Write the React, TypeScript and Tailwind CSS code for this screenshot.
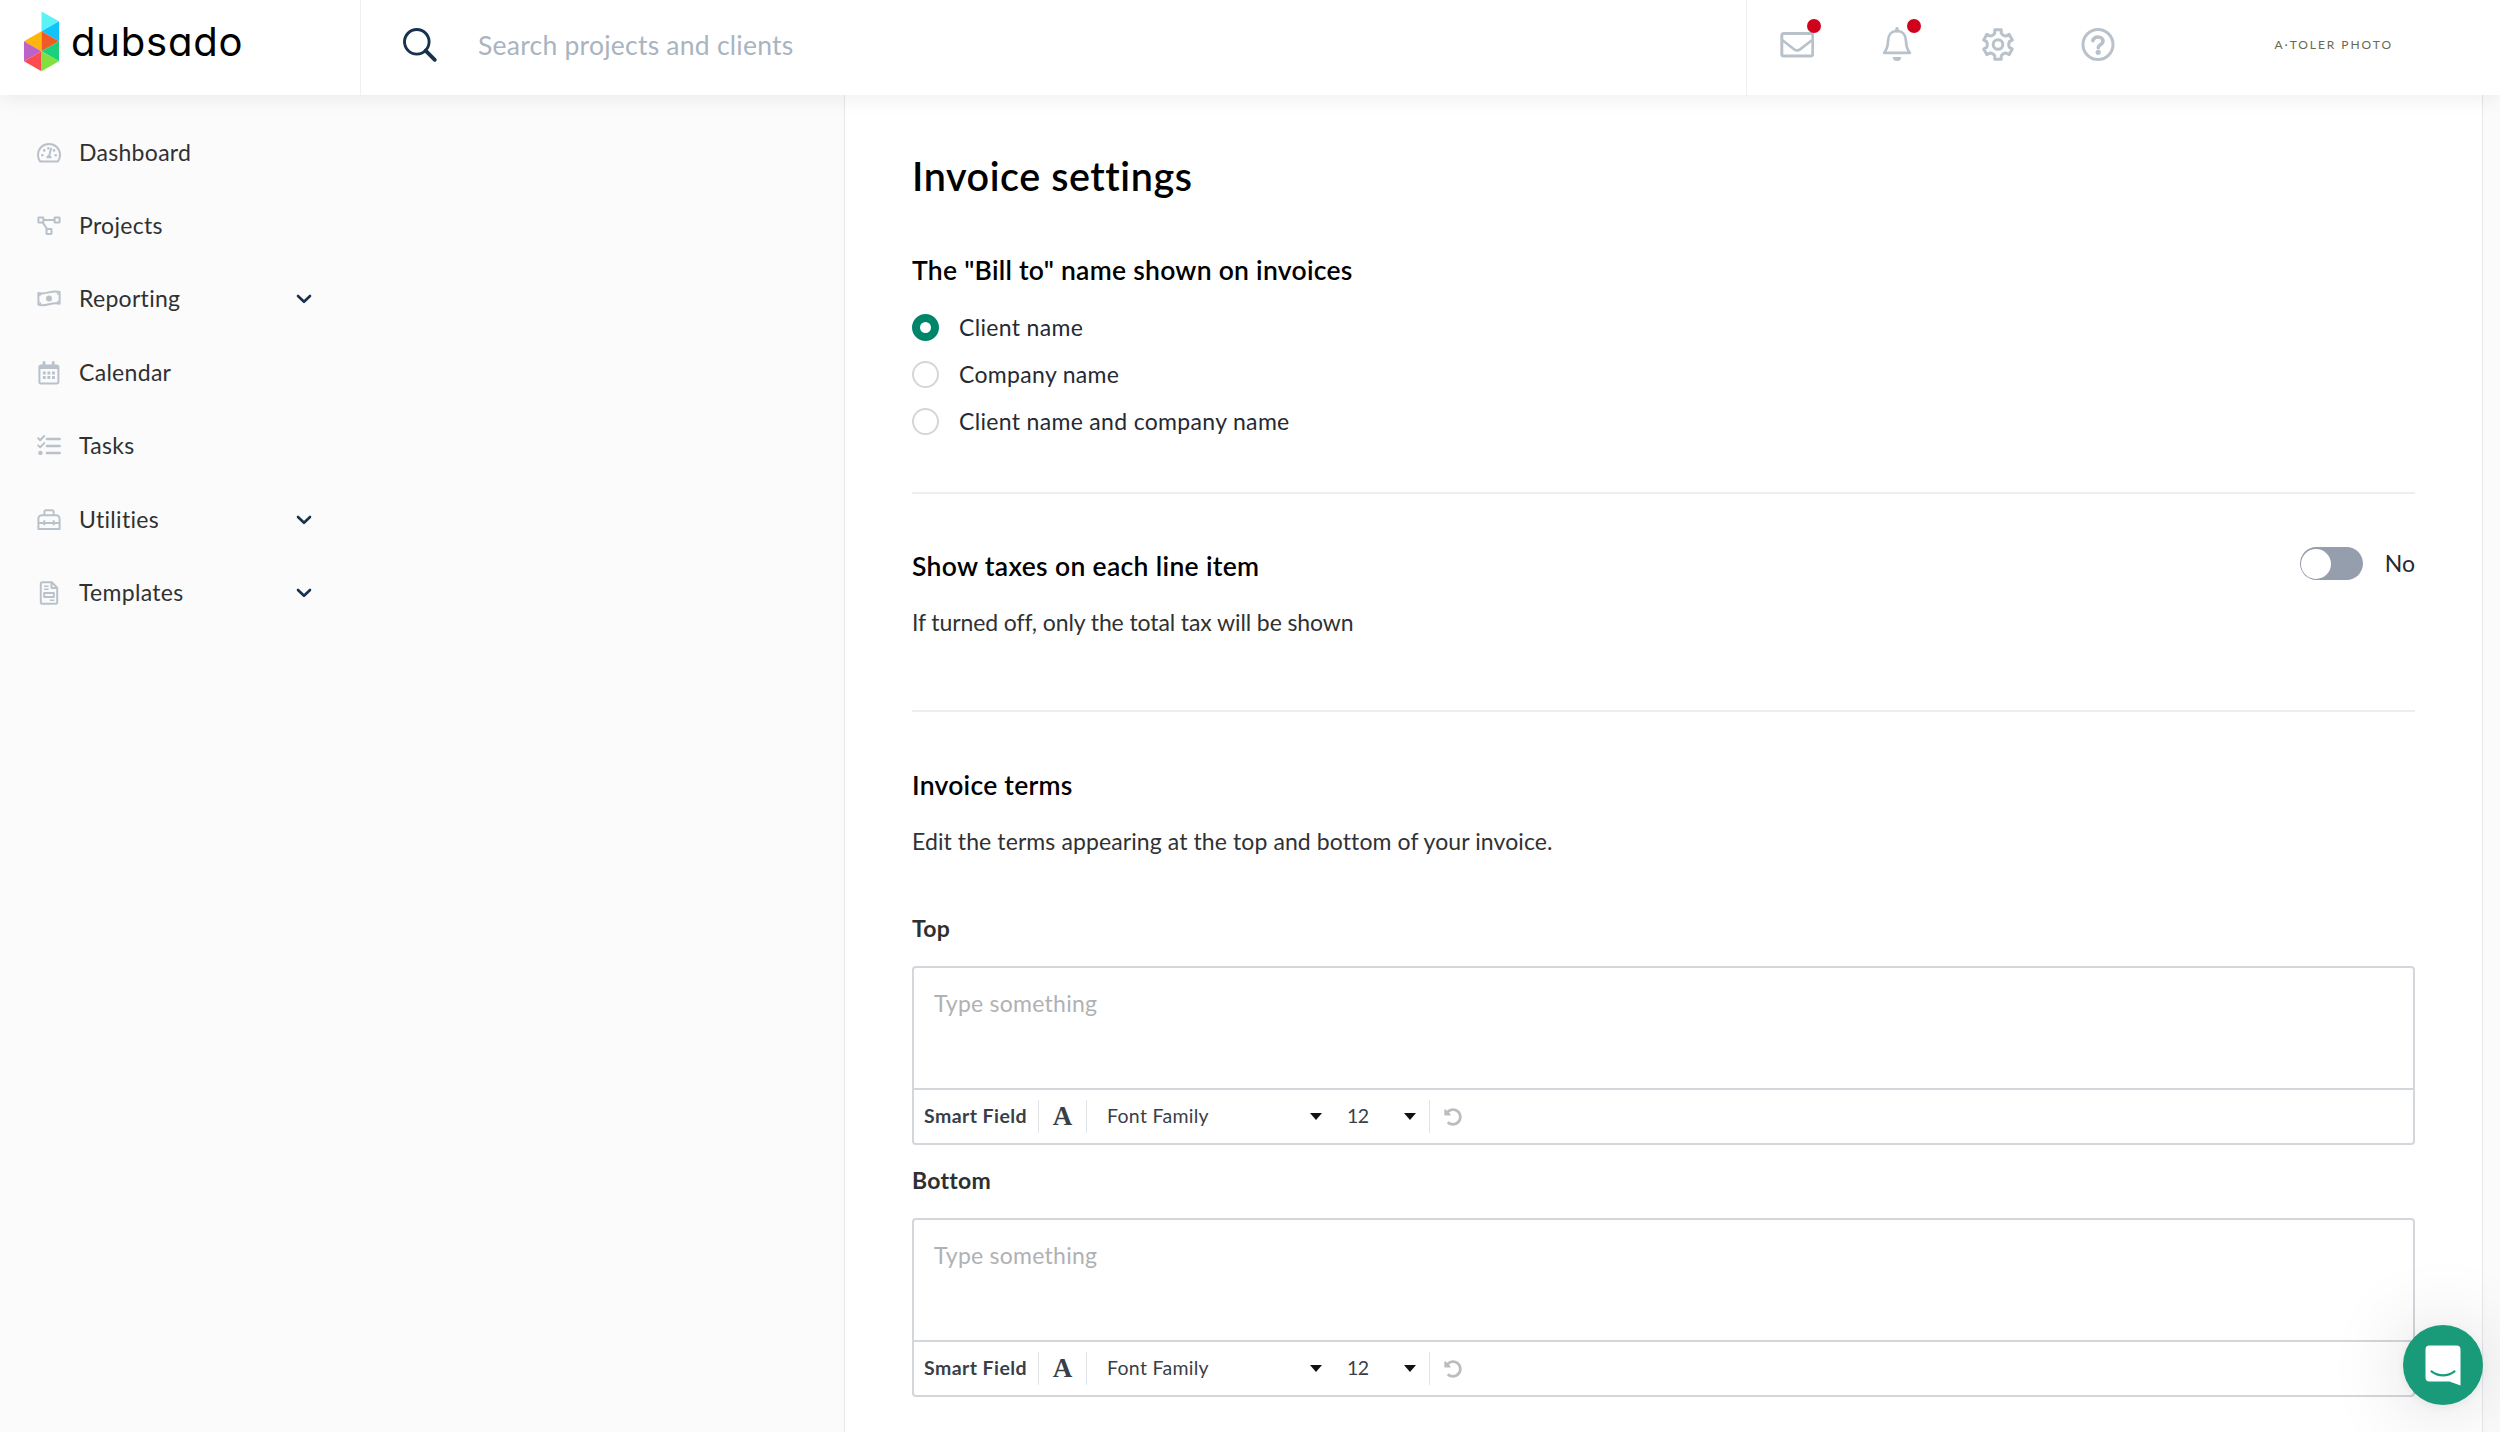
import { useState } from 'react';
import type { ReactNode } from 'react';
import { FaUndoAlt } from 'react-icons/fa';

type NavItem = {
  label: string;
  icon: ReactNode;
  expandable?: boolean;
};

const NavIcon = ({ children }: { children: ReactNode }) => (
  <svg
    width="24"
    height="24"
    viewBox="0 0 24 24"
    fill="none"
    stroke="#b9c2cb"
    strokeWidth="2"
    strokeLinejoin="round"
    className="shrink-0"
  >
    {children}
  </svg>
);

const navItems: NavItem[] = [
  {
    label: 'Dashboard',
    icon: (
      <NavIcon>
        <path d="M3.2 20.6h17.6c1.5-2 2.3-4.4 2.2-7C22.9 7.4 18 2.9 12 2.9S1.1 7.4 1 13.6c-.1 2.6.7 5 2.2 7z" />
        <path d="M12.3 14.5 14 7.5" strokeLinecap="round" />
        <g fill="#b9c2cb" stroke="none">
          <path d="M9.5 17.2a2.6 2.6 0 1 1 5 0z" />
          <circle cx="5.3" cy="14.3" r="1.3" />
          <circle cx="7.2" cy="9.4" r="1.3" />
          <circle cx="11.3" cy="7.2" r="1.2" />
          <circle cx="17" cy="9.4" r="1.3" />
          <circle cx="18.7" cy="14.3" r="1.3" />
        </g>
      </NavIcon>
    ),
  },
  {
    label: 'Projects',
    icon: (
      <NavIcon>
        <rect x="1.4" y="3.4" width="5" height="5" rx=".4" />
        <rect x="17.6" y="3.4" width="5" height="5" rx=".4" />
        <rect x="9.5" y="15" width="5" height="5" rx=".4" />
        <path d="M6.4 5.9h11.2M5.5 8.4l4.7 6.6" />
      </NavIcon>
    ),
  },
  {
    label: 'Reporting',
    expandable: true,
    icon: (
      <NavIcon>
        <path d="M1.4 6c3.5 1.2 7 .3 10.4-.6 3.4-.8 6.8-1.6 10.8-.4v11.8c-3.6-1.2-7-.4-10.5.4-3.5.9-7 1.7-10.7.6z" />
        <circle cx="12" cy="11.4" r="3" fill="#b9c2cb" stroke="none" />
        <path
          d="M1.5 8.4c1.4 0 2.4-.8 2.5-1.9M1.5 15.4c1.3 0 2.2.8 2.3 1.9M22.5 7.4c-1.3 0-2.2-.8-2.3-1.9M22.5 14.4c-1.4 0-2.4.8-2.5 1.9"
          strokeWidth="1.4"
        />
      </NavIcon>
    ),
  },
  {
    label: 'Calendar',
    icon: (
      <NavIcon>
        <rect x="2.4" y="4.4" width="19" height="18" rx="1.6" />
        <path d="M2.4 6h19M2.4 7h19" />
        <g fill="#b9c2cb" stroke="none">
          <rect x="5.6" y=".2" width="2.8" height="4" rx=".5" />
          <rect x="14.8" y=".2" width="2.8" height="4" rx=".5" />
          <rect x="5.8" y="10.5" width="2.9" height="2.9" rx=".5" />
          <rect x="10.4" y="10.5" width="2.9" height="2.9" rx=".5" />
          <rect x="15" y="10.5" width="2.9" height="2.9" rx=".5" />
          <rect x="5.8" y="15" width="2.9" height="2.9" rx=".5" />
          <rect x="10.4" y="15" width="2.9" height="2.9" rx=".5" />
          <rect x="15" y="15" width="2.9" height="2.9" rx=".5" />
        </g>
      </NavIcon>
    ),
  },
  {
    label: 'Tasks',
    icon: (
      <NavIcon>
        <path d="m1.2 4.3 2 2L7.2 2M1.2 11.4l2 2 4-4.3" strokeLinecap="round" />
        <circle cx="3.4" cy="18.9" r="2.2" fill="#b9c2cb" stroke="none" />
        <path d="M9.9 5h12.8M9.9 12h12.8M9.9 19h12.8" strokeWidth="2.4" strokeLinecap="round" />
      </NavIcon>
    ),
  },
  {
    label: 'Utilities',
    expandable: true,
    icon: (
      <NavIcon>
        <path d="M7.4 7.2V3.8c0-.9.7-1.6 1.6-1.6h6c.9 0 1.6.7 1.6 1.6v3.4" />
        <path d="M1.4 21V10.6a3.3 3.3 0 0 1 3.3-3.3h14.6a3.3 3.3 0 0 1 3.3 3.3V21z" />
        <path d="M1.4 15h21.2M7.3 12.3v5M16.7 12.3v5" />
      </NavIcon>
    ),
  },
  {
    label: 'Templates',
    expandable: true,
    icon: (
      <NavIcon>
        <path d="M14.8 1.3H5.4c-.9 0-1.6.7-1.6 1.5v18.4c0 .8.7 1.5 1.6 1.5h13.2c.9 0 1.6-.7 1.6-1.5V6.7z" />
        <path d="M14.5 1.5v5.4H20" />
        <path d="M7 5.2h4.6M7 8.2h4.6M12.8 19.3h4.6" strokeWidth="1.5" />
        <rect x="7.2" y="11.9" width="9.6" height="4" />
      </NavIcon>
    ),
  },
];

// outline of a six-toothed gear around 0,0
const gearPath = () => {
  const points: string[] = [];
  for (let i = 0; i < 6; i++) {
    const base = i * 60 - 90;
    [
      [-24, 10.8],
      [-16, 11.8],
      [-12.5, 15],
      [12.5, 15],
      [16, 11.8],
      [24, 10.8],
    ].forEach(([deg, r]) => {
      const a = ((base + deg) * Math.PI) / 180;
      points.push(`${(r * Math.cos(a)).toFixed(2)},${(r * Math.sin(a)).toFixed(2)}`);
    });
  }
  return `M${points.join('L')}Z`;
};

const Logo = () => (
  <div className="flex w-[361px] shrink-0 border-r border-[#eef0f1] pl-6 pt-[11px]">
    <svg width="35" height="61" viewBox="0 0 35 61">
      <path d="M17.5.5 35 10.3 17.5 20.3z" fill="#5cf3f7" />
      <path d="M35 10.3v20L17.5 20.3z" fill="#10c3fb" />
      <path d="M17.5 20.3v20L0 30.3z" fill="#ffb60c" />
      <path d="M17.5 20.3 35 30.3 17.5 40.3z" fill="#f15a24" />
      <path d="M0 30.3 17.5 40.3 0 50.3z" fill="#bd63c6" />
      <path d="M35 30.3v20L17.5 40.3z" fill="#1bd07b" />
      <path d="M17.5 40.3v20L0 50.3z" fill="#ff4b4f" />
      <path d="M17.5 40.3 35 50.3 17.5 60.3z" fill="#81e03d" />
    </svg>
    <span className="ml-[12px] mt-[7px] font-[Inter,sans-serif] text-[40px] leading-[48px] tracking-[0.8px] text-black [font-feature-settings:'cv11']">
      dubsado
    </span>
  </div>
);

const Header = () => (
  <header className="relative z-10 flex h-[95px] bg-white shadow-[0_0_22px_rgba(0,0,0,0.09)]">
    <Logo />
    <div className="flex flex-1 items-center pb-[5px]">
      <svg width="36" height="36" viewBox="0 0 36 36" fill="none" stroke="#17324d" className="ml-[41px]">
        <circle cx="14.8" cy="14.8" r="12.3" strokeWidth="2.9" />
        <path d="m23.6 23.6 9.2 9.2" strokeWidth="3.8" strokeLinecap="round" />
      </svg>
      <span className="ml-[40px] text-[26.5px] leading-8 tracking-[0.24px] text-[#a9b4bf]">Search projects and clients</span>
    </div>
    <div className="flex w-[754px] shrink-0 border-l border-[#eef0f1]">
      <div className="flex flex-1 pl-[33px] pt-[27px]">
        <div className="relative w-[34px]">
          <svg width="34" height="35" viewBox="0 0 34 35" fill="none" stroke="#b9c2cb" strokeWidth="3" strokeLinejoin="round">
            <rect x="1.8" y="6.5" width="31" height="22.5" rx="2" />
            <path d="m2.5 13.3 11.5 8.9c2 1.5 4.4 1.5 6.4 0l11.5-8.9" strokeWidth="2.7" />
          </svg>
          <span className="absolute -right-[7px] -top-2 size-[14px] rounded-full bg-[#d0021b]" />
        </div>
        <div className="relative ml-[67px] w-[33px]">
          <svg width="33" height="35" viewBox="0 0 33 35" fill="none" stroke="#b9c2cb" strokeWidth="2.7" strokeLinejoin="round">
            <path d="M16 4c-5.5 0-8.7 4-8.9 9.5-.2 5-.8 8.7-4 12.3h25.8c-3.2-3.6-3.8-7.3-4-12.3C24.7 8 21.5 4 16 4z" />
            <path d="M16 1.9V4" strokeWidth="3.6" strokeLinecap="round" />
            <path d="M11.8 30h8.4a4.2 4 0 0 1-8.4 0z" fill="#b9c2cb" stroke="none" />
          </svg>
          <span className="absolute -right-[7px] -top-2 size-[14px] rounded-full bg-[#d0021b]" />
        </div>
        <svg
          width="36"
          height="36"
          viewBox="-18 -17.5 36 36"
          fill="none"
          stroke="#b9c2cb"
          strokeWidth="3"
          strokeLinejoin="round"
          className="ml-[66px] shrink-0"
        >
          <path d={gearPath()} />
          <circle r="4.8" />
        </svg>
        <svg width="36" height="36" viewBox="-18 -18 36 36" fill="none" stroke="#b9c2cb" strokeWidth="3" className="ml-[64px] shrink-0">
          <circle r="15" cy="-.5" />
          <path d="M-5.2-4.5C-4.2-7-2.3-8-.2-8c3 0 5.2 1.8 5.2 4.2C5-.5.3-.6.3 2.6" strokeWidth="3.7" strokeLinecap="round" />
          <circle cy="7.3" cx=".2" r="2.6" fill="#b9c2cb" stroke="none" />
        </svg>
      </div>
      <span className="mr-[107px] mt-[33px] text-[12px] leading-6 tracking-[1.95px] text-[#66694f]">A·TOLER PHOTO</span>
    </div>
  </header>
);

const Sidebar = () => (
  <nav className="w-[844px] shrink-0 pt-[21px]">
    {navItems.map((item) => (
      <div key={item.label} className="flex h-[73.4px] w-[312px] items-center pl-[37px]">
        {item.icon}
        <span className="-mt-[2px] ml-[18px] flex-1 text-[23px] leading-8 tracking-[0.3px] text-[#303133]">{item.label}</span>
        {item.expandable && (
          <svg
            width="16"
            height="10"
            viewBox="0 0 16 10"
            fill="none"
            stroke="#17324d"
            strokeWidth="2.6"
            strokeLinecap="round"
            strokeLinejoin="round"
          >
            <path d="m2 2 6 5.8L14 2" />
          </svg>
        )}
      </div>
    ))}
  </nav>
);

const Caret = () => <span className="border-x-[6.5px] border-t-[7px] border-x-transparent border-t-[#111]" />;

const TermsEditor = ({ label }: { label: string }) => (
  <div>
    <h3 className="text-[23px] font-bold leading-8 tracking-[0.25px] text-[#2e2f31]">{label}</h3>
    <div className="mt-[22px] rounded-[4px] border-2 border-[#d3d6da]">
      <div className="h-[120px] pl-[20px] pt-[19px] text-[23px] leading-8 tracking-[0.25px] text-[#b0b1b3]">
        Type something
      </div>
      <div className="flex h-[55px] items-center border-t-2 border-[#d3d6da] text-[19.5px] text-[#3a3f47]">
        <div className="flex h-[33px] w-[125px] items-center border-r border-[#e1e3e6] pb-[2px] pl-[10px] font-bold tracking-[0.43px]">
          Smart Field
        </div>
        <div className="flex h-[33px] w-12 items-center justify-center border-r border-[#e1e3e6] font-['Liberation_Serif',serif] text-[27px] font-bold">
          A
        </div>
        <div className="flex h-[33px] w-[343px] items-center border-r border-[#e1e3e6] pl-[20px] pr-[13px]">
          <span className="w-[203px] pb-[2px] tracking-[0.3px]">Font Family</span>
          <Caret />
          <span className="ml-[25px] flex-1 pb-[2px] tracking-[-0.6px]">12</span>
          <Caret />
        </div>
        <FaUndoAlt className="ml-[14px] size-[18px] text-[#bdbdbd]" />
      </div>
    </div>
  </div>
);

const billToOptions: [string, string][] = [
  ['client', 'Client name'],
  ['company', 'Company name'],
  ['both', 'Client name and company name'],
];

const InvoiceSettings = () => {
  const [billTo, setBillTo] = useState('client');
  const [showTaxes, setShowTaxes] = useState(false);

  return (
    <main className="w-[1639px] shrink-0 border-x border-[#e4e7ec] bg-white px-[67px] pt-[57px] text-black">
      <h1 className="text-[39.5px] font-semibold leading-[48px] tracking-[0.57px]">Invoice settings</h1>

      <h2 className="mt-[54px] text-[26.5px] font-semibold leading-8 tracking-[0.27px]">
        The "Bill to" name shown on invoices
      </h2>
      <div className="mt-[18px]">
        {billToOptions.map(([value, text]) => (
          <div key={value} className="flex h-[47px] cursor-pointer items-center" onClick={() => setBillTo(value)}>
            {billTo === value ? (
              <span className="size-[27px] rounded-full border-[8.5px] border-[#00856a]" />
            ) : (
              <span className="size-[27px] rounded-full border-2 border-[#d3d6da]" />
            )}
            <span className="-mt-[2px] ml-[20px] text-[23px] leading-8 tracking-[0.32px] text-[#252a33]">{text}</span>
          </div>
        ))}
      </div>

      <hr className="mt-[47px] border-t-2 border-[#eceeef]" />

      <div className="mt-[53px] flex items-start justify-between">
        <div className="pt-[3px]">
          <h2 className="text-[26.5px] font-semibold leading-8 tracking-[0.33px]">Show taxes on each line item</h2>
          <p className="mt-6 text-[23px] leading-8 tracking-[-0.1px] text-[#303133]">
            If turned off, only the total tax will be shown
          </p>
        </div>
        <div className="flex items-center">
          <button
            onClick={() => setShowTaxes(!showTaxes)}
            className="flex h-[33px] w-[63px] items-center rounded-full bg-[#959eac] px-[1.5px]"
          >
            <span className="size-[30px] rounded-full bg-white" />
          </button>
          <span className="-mt-[2px] ml-[22px] text-[23px] leading-8 text-[#252a33]">{showTaxes ? 'Yes' : 'No'}</span>
        </div>
      </div>

      <hr className="mt-[72px] border-t-2 border-[#eceeef]" />

      <h2 className="mt-[57px] text-[26.5px] font-semibold leading-8 tracking-[0.25px]">Invoice terms</h2>
      <p className="mt-6 text-[23px] leading-8 tracking-[0.1px] text-[#303133]">
        Edit the terms appearing at the top and bottom of your invoice.
      </p>

      <div className="mt-[55px] flex flex-col gap-[19px]">
        <TermsEditor label="Top" />
        <TermsEditor label="Bottom" />
      </div>
    </main>
  );
};

const ChatLauncher = () => (
  <button className="absolute bottom-[27px] right-[17px] z-20 flex size-20 items-center justify-center rounded-full bg-[#199b7a] shadow-[0_2px_10px_rgba(0,0,0,0.06),0_3px_80px_rgba(0,0,0,0.16)]">
    <svg width="36" height="41" viewBox="0 0 36 41">
      <path d="M4.5.5h27a4 4 0 0 1 4 4v36l-11-4h-20a4 4 0 0 1-4-4v-28a4 4 0 0 1 4-4z" fill="#fff" />
      <path d="M6.5 26.3c7 5.4 16 5.4 23 0" fill="none" stroke="#199b7a" strokeWidth="2.2" strokeLinecap="round" />
    </svg>
  </button>
);

export default function App() {
  return (
    <div className="relative flex h-[1432px] w-[2500px] flex-col overflow-hidden bg-[#fbfbfb] font-[Lato,sans-serif]">
      <Header />
      <div className="flex flex-1">
        <Sidebar />
        <InvoiceSettings />
      </div>
      <ChatLauncher />
    </div>
  );
}
